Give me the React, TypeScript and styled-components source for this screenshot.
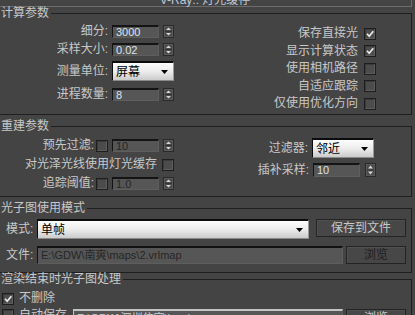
import React from "react";
import styled, { createGlobalStyle } from "styled-components";

const GlobalStyle = createGlobalStyle`
  html, body { margin: 0; padding: 0; background: #444444; }
  body {
    font-family: "Liberation Sans", "Noto Sans CJK SC", sans-serif;
    font-size: 12px;
    color: #c8c8c8;
    overflow: hidden;
  }
  #root { width: 415px; height: 315px; overflow: hidden; }
`;

const Page = styled.div`
  width: 415px;
  height: 315px;
  overflow: hidden;
  background: #444444;
  display: flex;
  flex-direction: column;
`;

const TitleBar = styled.div`
  flex: none;
  height: 12px;
  margin: -7px 3px 0 -2px;
  border: 1px solid #6c6c6c;
  text-align: center;
  line-height: 12px;
  font-size: 12px;
  color: #bcc6d8;
  white-space: nowrap;
`;

const Group = styled.fieldset<{ $mt: number }>`
  flex: none;
  margin: ${(p) => p.$mt}px 3px 0 -3px;
  padding: 0;
  border: 1px solid #1f1f1f;
  min-width: 0;
`;

const Legend = styled.legend`
  padding: 0 2px 0 3px;
  margin: 0;
  height: 13px;
  line-height: 13px;
  font-size: 12px;
  color: #c8c8c8;
  white-space: nowrap;
`;

const GroupBody = styled.div<{ $pt: number; $pb: number; $pl?: number; $pr?: number }>`
  display: flex;
  align-items: flex-start;
  padding: ${(p) => p.$pt}px ${(p) => p.$pr ?? 0}px ${(p) => p.$pb}px ${(p) => p.$pl ?? 0}px;
`;

const StackBody = styled.div<{ $pt: number; $pb: number; $pl: number; $pr: number; $gap: number }>`
  display: flex;
  flex-direction: column;
  gap: ${(p) => p.$gap}px;
  padding: ${(p) => p.$pt}px ${(p) => p.$pr}px ${(p) => p.$pb}px ${(p) => p.$pl}px;
`;

const Column = styled.div<{ $w?: number; $gap: number; $mt?: number; $pr?: number }>`
  display: flex;
  flex-direction: column;
  align-items: flex-end;
  gap: ${(p) => p.$gap}px;
  margin-top: ${(p) => p.$mt ?? 0}px;
  padding-right: ${(p) => p.$pr ?? 0}px;
  ${(p) => (p.$w ? `width: ${p.$w}px; flex: none;` : "flex: 1;")}
`;

const Row = styled.div<{ $gap: number; $h: number; $mr?: number }>`
  display: flex;
  align-items: center;
  gap: ${(p) => p.$gap}px;
  height: ${(p) => p.$h}px;
  margin-right: ${(p) => p.$mr ?? 0}px;
`;

const Label = styled.span<{ $w?: number; $dim?: boolean }>`
  white-space: nowrap;
  line-height: 13px;
  font-size: 12px;
  color: #c8c8c8;
  ${(p) => (p.$w ? `width: ${p.$w}px; flex: none;` : "")}
`;

const NumInput = styled.div<{ $disabled?: boolean; $h?: number; $w?: number }>`
  box-sizing: border-box;
  width: ${(p) => p.$w ?? 47}px;
  height: ${(p) => p.$h ?? 13}px;
  background: #565656;
  border-top: 2px solid #141414;
  border-left: 1px solid #141414;
  border-right: 1px solid #5e5e5e;
  border-bottom: 1px solid #5e5e5e;
  padding-left: 3px;
  font-family: "Liberation Sans", "Noto Sans CJK SC", sans-serif;
  font-size: 11px;
  line-height: ${(p) => (p.$h ?? 13) - 3}px;
  color: ${(p) => (p.$disabled ? "#262626" : "#dde3ee")};
  white-space: nowrap;
  overflow: hidden;
`;

const PathInput = styled.div<{ $w: number; $h: number; $active?: boolean }>`
  box-sizing: border-box;
  flex: none;
  width: ${(p) => p.$w}px;
  height: ${(p) => p.$h}px;
  background: #565656;
  border-top: 2px solid ${(p) => (p.$active ? "#c4c4c4" : "#121212")};
  border-left: 1px solid ${(p) => (p.$active ? "#c4c4c4" : "#121212")};
  border-right: 1px solid #5e5e5e;
  border-bottom: 1px solid #5e5e5e;
  padding-left: 3px;
  font-size: 11px;
  line-height: ${(p) => p.$h - 3}px;
  color: ${(p) => (p.$active ? "#cfcfcf" : "#262626")};
  white-space: nowrap;
  overflow: hidden;
`;

const Dropdown = styled.div<{ $w: number }>`
  box-sizing: border-box;
  flex: none;
  width: ${(p) => p.$w}px;
  height: 20px;
  border-top: 2px solid #0c0c0c;
  border-left: 1px solid #0c0c0c;
  border-right: 1px solid #9a9a9a;
  border-bottom: 1px solid #8a8a8a;
  background: linear-gradient(#fdfdfd, #ececec 50%, #cbcbcb);
  color: #000;
  display: flex;
  align-items: center;
  justify-content: space-between;
  padding: 0 5px 0 3px;
  font-size: 12px;
  line-height: 16px;
  white-space: nowrap;
`;

const Button = styled.div<{ $w: number; $h: number; $disabled?: boolean }>`
  box-sizing: border-box;
  flex: none;
  width: ${(p) => p.$w}px;
  height: ${(p) => p.$h}px;
  border: 1px solid #242424;
  background: #474747;
  box-shadow: inset 1px 1px 0 #505050;
  color: ${(p) => (p.$disabled ? "#1e1e1e" : "#c8c8c8")};
  font-size: 12px;
  line-height: ${(p) => p.$h - 2}px;
  text-align: center;
  white-space: nowrap;
`;

const Spinner = ({ h = 13 }: { h?: number }) => (
  <svg width="11" height={h} viewBox={`0 0 11 ${h}`} style={{ flex: "none", display: "block" }}>
    <rect x="0.5" y="0.5" width="10" height={h - 1} fill="#4a4a4a" stroke="#2a2a2a" />
    <rect x="1.5" y="1.5" width="8" height={h - 3} fill="none" stroke="#5a5a5a" />
    <line x1="2" x2="9" y1={h / 2} y2={h / 2} stroke="#333" />
    <polygon points={`3,${h / 2 - 1.5} 8,${h / 2 - 1.5} 5.5,2.5`} fill="#d6d6d6" />
    <polygon points={`3,${h / 2 + 1.5} 8,${h / 2 + 1.5} 5.5,${h - 2.5}`} fill="#d6d6d6" />
  </svg>
);

const Check = ({ on = false }: { on?: boolean }) => (
  <svg width="12" height="12" viewBox="0 0 12 12" style={{ flex: "none", display: "block" }}>
    <rect x="0.5" y="0.5" width="11" height="11" fill="#4c4c4c" stroke="#1e1e1e" />
    <path d="M1.5 10.5 V1.5 H10.5" fill="none" stroke="#3a3a3a" />
    <path d="M1.5 10.5 H10.5 V1.5" fill="none" stroke="#5e5e5e" />
    {on && <path d="M3 5.8 L5.2 8.2 L9.3 3.2" fill="none" stroke="#ececec" strokeWidth="1.7" />}
  </svg>
);

const Arrow = () => (
  <svg width="7" height="4" viewBox="0 0 7 4" style={{ flex: "none", display: "block" }}>
    <polygon points="0,0 7,0 3.5,4" fill="#000" />
  </svg>
);

export default function App() {
  return (
    <Page>
      <GlobalStyle />
      <TitleBar>V-Ray:: 灯光缓存</TitleBar>

      <Group $mt={0}>
        <Legend>计算参数</Legend>
        <GroupBody $pt={5} $pb={4}>
          <Column $w={176} $gap={5}>
            <Row $gap={4} $h={13}>
              <Label>细分:</Label>
              <NumInput>3000</NumInput>
              <Spinner />
            </Row>
            <Row $gap={4} $h={13}>
              <Label>采样大小:</Label>
              <NumInput>0.02</NumInput>
              <Spinner />
            </Row>
            <Row $gap={4} $h={20}>
              <Label>测量单位:</Label>
              <Dropdown $w={62}>
                <span>屏幕</span>
                <Arrow />
              </Dropdown>
            </Row>
            <Row $gap={4} $h={13} style={{ marginTop: 2 }}>
              <Label>进程数量:</Label>
              <NumInput>8</NumInput>
              <Spinner />
            </Row>
          </Column>
          <Column $gap={4.5} $mt={2} $pr={35}>
            <Row $gap={6} $h={13}>
              <Label>保存直接光</Label>
              <Check on />
            </Row>
            <Row $gap={6} $h={13}>
              <Label>显示计算状态</Label>
              <Check on />
            </Row>
            <Row $gap={6} $h={13}>
              <Label>使用相机路径</Label>
              <Check />
            </Row>
            <Row $gap={6} $h={13}>
              <Label>自适应跟踪</Label>
              <Check />
            </Row>
            <Row $gap={6} $h={13}>
              <Label>仅使用优化方向</Label>
              <Check />
            </Row>
          </Column>
        </GroupBody>
      </Group>

      <Group $mt={5}>
        <Legend>重建参数</Legend>
        <GroupBody $pt={6} $pb={6}>
          <Column $w={176} $gap={6}>
            <Row $gap={4} $h={13}>
              <Label style={{ marginRight: -2 }}>预先过滤:</Label>
              <Check />
              <NumInput $disabled>10</NumInput>
              <Spinner />
            </Row>
            <Row $gap={5} $h={13}>
              <Label>对光泽光线使用灯光缓存</Label>
              <Check />
            </Row>
            <Row $gap={4} $h={13}>
              <Label style={{ marginRight: -2 }}>追踪阈值:</Label>
              <Check />
              <NumInput $disabled>1.0</NumInput>
              <Spinner />
            </Row>
          </Column>
          <Column $gap={5} $mt={-1} $pr={35}>
            <Row $gap={4} $h={20} $mr={2}>
              <Label>过滤器:</Label>
              <Dropdown $w={62}>
                <span>邻近</span>
                <Arrow />
              </Dropdown>
            </Row>
            <Row $gap={5} $h={14}>
              <Label style={{ marginRight: -1 }}>插补采样:</Label>
              <NumInput $h={14}>10</NumInput>
              <Spinner h={14} />
            </Row>
          </Column>
        </GroupBody>
      </Group>

      <Group $mt={5}>
        <Legend>光子图使用模式</Legend>
        <StackBody $pt={4} $pb={8} $pl={8} $pr={5} $gap={7}>
          <Row $gap={0} $h={20}>
            <Label $w={31}>模式:</Label>
            <Dropdown $w={272}>
              <span>单帧</span>
              <Arrow />
            </Dropdown>
            <Button $w={90} $h={18} style={{ marginLeft: 7, alignSelf: "flex-start" }}>
              保存到文件
            </Button>
          </Row>
          <Row $gap={3} $h={18}>
            <Label $w={28}>文件:</Label>
            <PathInput $w={306} $h={18}>E:\GDW\南爽\maps\2.vrlmap</PathInput>
            <Button $w={60} $h={18} $disabled>
              浏览
            </Button>
          </Row>
        </StackBody>
      </Group>

      <Group $mt={0}>
        <Legend>渲染结束时光子图处理</Legend>
        <StackBody $pt={6} $pb={4} $pl={4} $pr={5} $gap={4}>
          <Row $gap={5} $h={13}>
            <Check on />
            <Label>不删除</Label>
          </Row>
          <Row $gap={0} $h={18} style={{ alignItems: "flex-start" }}>
            <Check />
            <Label style={{ marginLeft: 5, width: 54 }}>自动保存</Label>
            <PathInput $w={270} $h={18} $active>
              E:\GDW\深圳住宅\lc.vrlmap
            </PathInput>
            <Button $w={60} $h={18} style={{ marginLeft: 3 }}>
              浏览
            </Button>
          </Row>
        </StackBody>
      </Group>
    </Page>
  );
}
